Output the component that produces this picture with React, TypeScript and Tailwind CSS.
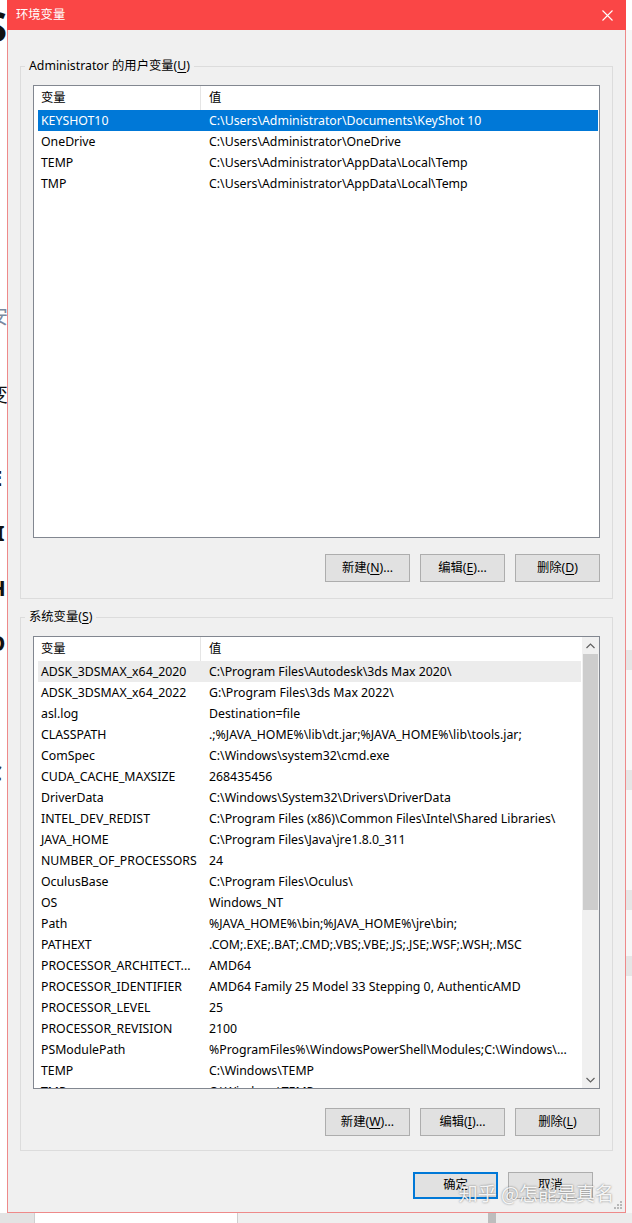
import React from "react";
import clsx from "clsx";

type Row = [string, string];

const userVars: Row[] = [
  ["KEYSHOT10", "C:\\Users\\Administrator\\Documents\\KeyShot 10"],
  ["OneDrive", "C:\\Users\\Administrator\\OneDrive"],
  ["TEMP", "C:\\Users\\Administrator\\AppData\\Local\\Temp"],
  ["TMP", "C:\\Users\\Administrator\\AppData\\Local\\Temp"],
];

const sysVars: Row[] = [
  ["ADSK_3DSMAX_x64_2020", "C:\\Program Files\\Autodesk\\3ds Max 2020\\"],
  ["ADSK_3DSMAX_x64_2022", "G:\\Program Files\\3ds Max 2022\\"],
  ["asl.log", "Destination=file"],
  ["CLASSPATH", ".;%JAVA_HOME%\\lib\\dt.jar;%JAVA_HOME%\\lib\\tools.jar;"],
  ["ComSpec", "C:\\Windows\\system32\\cmd.exe"],
  ["CUDA_CACHE_MAXSIZE", "268435456"],
  ["DriverData", "C:\\Windows\\System32\\Drivers\\DriverData"],
  ["INTEL_DEV_REDIST", "C:\\Program Files (x86)\\Common Files\\Intel\\Shared Libraries\\"],
  ["JAVA_HOME", "C:\\Program Files\\Java\\jre1.8.0_311"],
  ["NUMBER_OF_PROCESSORS", "24"],
  ["OculusBase", "C:\\Program Files\\Oculus\\"],
  ["OS", "Windows_NT"],
  ["Path", "%JAVA_HOME%\\bin;%JAVA_HOME%\\jre\\bin;"],
  ["PATHEXT", ".COM;.EXE;.BAT;.CMD;.VBS;.VBE;.JS;.JSE;.WSF;.WSH;.MSC"],
  ["PROCESSOR_ARCHITECT...", "AMD64"],
  ["PROCESSOR_IDENTIFIER", "AMD64 Family 25 Model 33 Stepping 0, AuthenticAMD"],
  ["PROCESSOR_LEVEL", "25"],
  ["PROCESSOR_REVISION", "2100"],
  ["PSModulePath", "%ProgramFiles%\\WindowsPowerShell\\Modules;C:\\Windows\\..."],
  ["TEMP", "C:\\Windows\\TEMP"],
  ["TMP", "C:\\Windows\\TEMP"],
];

// little chevron used by the scrollbar arrows
const Chevron = ({ up }: { up?: boolean }) => (
  <svg width="9" height="6" viewBox="0 0 9 6">
    <polyline
      points={up ? "0.5,5 4.5,1 8.5,5" : "0.5,1 4.5,5 8.5,1"}
      fill="none"
      stroke="#606060"
      strokeWidth="1.2"
    />
  </svg>
);

const Scrollbar = () => (
  <div className="w-[17px] shrink-0 bg-[#f0f0f0] flex flex-col">
    <div className="h-[17px] flex items-center justify-center">
      <Chevron up />
    </div>
    <div className="h-[256px] mx-[1px] bg-[#cdcdcd]" />
    <div className="flex-1" />
    <div className="h-[17px] flex items-center justify-center">
      <Chevron />
    </div>
  </div>
);

function VarList({
  rows,
  selected,
  hover,
  scroll,
}: {
  rows: Row[];
  selected?: number;
  hover?: number;
  scroll?: boolean;
}) {
  return (
    <div className="h-[453px] border border-[#828790] bg-white flex overflow-hidden">
      <div className="flex-1 min-w-0 flex flex-col">
        <div className="h-[24px] shrink-0 flex items-center">
          <div className="w-[167px] h-full pl-[7px] pt-[1px] flex items-center border-r border-[#e5e5e5]">变量</div>
          <div className="pl-[8px] pt-[1px]">值</div>
        </div>
        {rows.map(([name, value], i) => (
          <div
            key={name + i}
            className={clsx(
              "h-[21px] shrink-0 ml-[4px] mr-[1px] pt-[2px] flex items-center",
              i === selected && "bg-[#0078d7] text-white",
              i === hover && "bg-[#ececec]"
            )}
          >
            <div className="w-[163px] shrink-0 pl-[3px] whitespace-nowrap overflow-hidden">{name}</div>
            <div className="pl-[8px] whitespace-nowrap">{value}</div>
          </div>
        ))}
      </div>
      {scroll && <Scrollbar />}
    </div>
  );
}

function Btn({ pre, hot, post, primary }: { pre: string; hot?: string; post?: string; primary?: boolean }) {
  return (
    <div
      className={clsx(
        "w-[85px] h-full flex items-center justify-center bg-[#e1e1e1]",
        primary ? "border-2 border-[#0078d7]" : "border border-[#adadad]"
      )}
    >
      {pre}
      {hot && <span className="underline underline-offset-2">{hot}</span>}
      {post}
    </div>
  );
}

function Group({ title, hot, children, className }: { title: string; hot: string; children: React.ReactNode; className?: string }) {
  return (
    <div className={clsx("border border-[#dcdcdc] px-[12px]", className)}>
      <div className="-mt-[9px] -ml-[8px] w-fit px-[4px] h-[16px] leading-[16px] bg-[#f0f0f0]">
        {title}(<span className="underline underline-offset-2">{hot}</span>)
      </div>
      {children}
    </div>
  );
}

export default function App() {
  return (
    <div className="w-[632px] h-[1223px] overflow-hidden bg-[#f3f3f3] flex flex-col text-[12.3px] text-black font-['Noto_Sans','Noto_Sans_CJK_SC',sans-serif]">
      <div className="h-[1213px] flex shrink-0">
        {/* window behind, left edge */}
        <div className="w-[7px] shrink-0 bg-white overflow-hidden flex flex-col font-bold text-[#111]">
          <div className="-ml-[16px] mt-[4px] text-[42px] leading-[44px]">S</div>
          <div className="-ml-[12px] mt-[257px] text-[20px] leading-[24px] font-normal text-[#7a8aa0]">安</div>
          <div className="-ml-[12px] mt-[54px] text-[20px] leading-[24px] font-normal">变</div>
          <div className="-ml-[10px] mt-[58px] text-[22px] leading-[24px]">E</div>
          <div className="-ml-[4px] mt-[31px] text-[22px] leading-[24px]">I</div>
          <div className="-ml-[11px] mt-[31px] text-[22px] leading-[24px]">H</div>
          <div className="-ml-[12px] mt-[31px] text-[22px] leading-[24px]">O</div>
          <div className="-ml-[12px] mt-[106px] text-[22px] leading-[24px] text-[#333]">C</div>
        </div>

        {/* dialog */}
        <div className="w-[619px] shrink-0 flex flex-col relative">
          <div className="h-[30px] shrink-0 bg-[#fa4646] flex items-center text-white">
            <div className="pl-[9px] flex-1">环境变量</div>
            <svg width="11" height="11" viewBox="0 0 11 11" className="mr-[13px]">
              <path d="M0.5 0.5 L10.5 10.5 M10.5 0.5 L0.5 10.5" stroke="white" strokeWidth="1.1" />
            </svg>
          </div>
          <div className="flex-1 bg-[#f0f0f0] border-x border-b border-[#ee8a8a] flex flex-col">
            <Group title="Administrator 的用户变量" hot="U" className="mt-[36px] ml-[12px] mr-[12px] pb-[16px]">
              <div className="mt-[11px]">
                <VarList rows={userVars} selected={0} />
              </div>
              <div className="mt-[16px] h-[28px] flex justify-end gap-[10px]">
                <Btn pre="新建(" hot="N" post=")..." />
                <Btn pre="编辑(" hot="E" post=")..." />
                <Btn pre="删除(" hot="D" post=")" />
              </div>
            </Group>

            <Group title="系统变量" hot="S" className="mt-[18px] ml-[12px] mr-[12px] pb-[14px]">
              <div className="mt-[11px]">
                <VarList rows={sysVars} hover={0} scroll />
              </div>
              <div className="mt-[19px] h-[28px] flex justify-end gap-[10px]">
                <Btn pre="新建(" hot="W" post=")..." />
                <Btn pre="编辑(" hot="I" post=")..." />
                <Btn pre="删除(" hot="L" post=")" />
              </div>
            </Group>

            <div className="mt-[21px] h-[27px] flex justify-end gap-[10px] pr-[32px]">
              <Btn pre="确定" primary />
              <Btn pre="取消" />
            </div>
          </div>

          {/* watermark */}
          <div className="absolute right-[12px] bottom-[8px] text-[19px] leading-[24px] text-white/90 [text-shadow:0_0_2px_rgba(0,0,0,0.55)] font-['Noto_Sans_CJK_SC',sans-serif] whitespace-nowrap">
            知乎 @怎能是真名
          </div>

          {/* resize grip */}
          <svg width="10" height="10" viewBox="0 0 10 10" className="absolute right-[3px] bottom-[3px]">
            <rect x="7" y="1" width="2" height="2" fill="#b8b8b8" />
            <rect x="4" y="4" width="2" height="2" fill="#b8b8b8" />
            <rect x="7" y="4" width="2" height="2" fill="#b8b8b8" />
            <rect x="1" y="7" width="2" height="2" fill="#b8b8b8" />
            <rect x="4" y="7" width="2" height="2" fill="#b8b8b8" />
            <rect x="7" y="7" width="2" height="2" fill="#b8b8b8" />
          </svg>
        </div>

        {/* window behind, right edge */}
        <div className="w-[6px] shrink-0 bg-[#f7f7f7] flex flex-col text-[12px] text-[#222]">
          <div className="h-[30px] bg-white" />
          <div className="mt-[620px] h-[20px] bg-[#e6e6e6]" />
          <div className="mt-[100px] h-[20px] bg-[#e6e6e6]" />
          <div className="mt-[100px] h-[20px] bg-[#e6e6e6]" />
          <div className="mt-[46px] h-[20px] bg-[#e6e6e6]" />
        </div>
      </div>

      {/* strip of the window below the dialog */}
      <div className="flex-1 flex">
        <div className="w-[34px] bg-[#e3e3e3]" />
        <div className="w-[204px] bg-white border-x border-[#cfcfcf]" />
        <div className="w-[250px] bg-[#f0f0f0]" />
        <div className="w-[8px] bg-[#bdbdbd]" />
        <div className="flex-1 bg-[#ececec]" />
      </div>
    </div>
  );
}
